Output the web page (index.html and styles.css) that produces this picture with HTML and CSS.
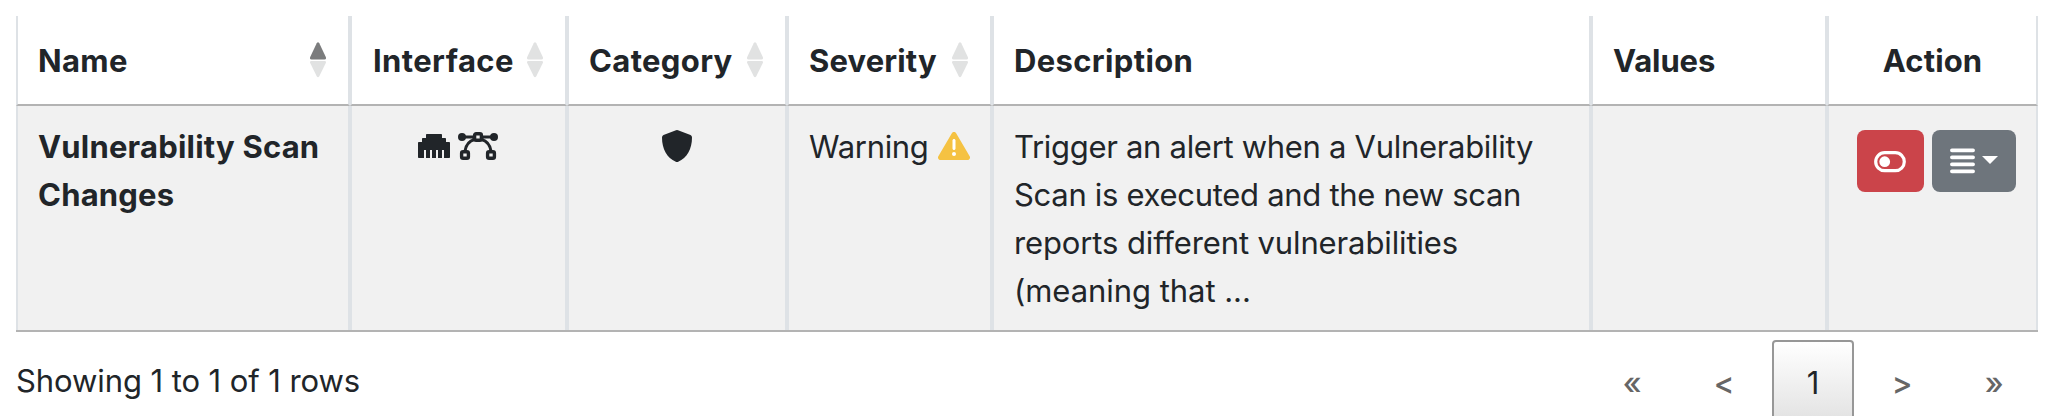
FILE: index.html
```html
<!DOCTYPE html>
<html lang="en">
<head>
<meta charset="utf-8">
<title>Alerts</title>
<link rel="stylesheet" href="styles.css">
</head>
<body>
<main>
<div class="grid head">
  <div class="cell sortable"><span class="h-name">Name</span><svg class="sort" viewBox="0 0 16 36"><path class="on" d="M6.700 1.200Q8-.8 9.300 1.200L15.800 15Q16.600 17.500 14.500 17.500H1.500Q-.6 17.500.2 15Z"/><path class="off" d="M6.700 34.300Q8 36.300 9.300 34.300L15.800 21Q16.600 19 14.500 19H1.500Q-.6 19 .2 21Z"/></svg></div>
  <div class="cell sortable"><span class="h-interface">Interface</span><svg class="sort" viewBox="0 0 16 36"><path class="off" d="M6.700 1.200Q8-.8 9.300 1.200L15.800 15Q16.600 17.500 14.500 17.500H1.500Q-.6 17.500.2 15Z"/><path class="off" d="M6.700 34.300Q8 36.300 9.300 34.300L15.800 21Q16.600 19 14.500 19H1.500Q-.6 19 .2 21Z"/></svg></div>
  <div class="cell sortable"><span class="h-category">Category</span><svg class="sort" viewBox="0 0 16 36"><path class="off" d="M6.700 1.200Q8-.8 9.300 1.200L15.800 15Q16.600 17.500 14.500 17.500H1.500Q-.6 17.500.2 15Z"/><path class="off" d="M6.700 34.300Q8 36.300 9.300 34.300L15.800 21Q16.600 19 14.500 19H1.500Q-.6 19 .2 21Z"/></svg></div>
  <div class="cell sortable"><span class="h-severity">Severity</span><svg class="sort" viewBox="0 0 16 36"><path class="off" d="M6.700 1.200Q8-.8 9.300 1.200L15.800 15Q16.600 17.500 14.500 17.500H1.500Q-.6 17.500.2 15Z"/><path class="off" d="M6.700 34.300Q8 36.300 9.300 34.300L15.800 21Q16.600 19 14.500 19H1.500Q-.6 19 .2 21Z"/></svg></div>
  <div class="cell"><span class="h-description">Description</span></div>
  <div class="cell"><span class="h-values">Values</span></div>
  <div class="cell center"><span class="h-action">Action</span></div>
</div>
<div class="grid row">
  <div class="cell name">Vulnerability Scan<br>Changes</div>
  <div class="cell icons">
    <svg width="32" height="32" viewBox="0 0 512 512"><path fill="currentColor" d="M496 192h-48v-48c0-8.800-7.200-16-16-16h-48V80c0-8.800-7.200-16-16-16H144c-8.800 0-16 7.200-16 16v48H80c-8.800 0-16 7.200-16 16v48H16c-8.800 0-16 7.200-16 16v224c0 8.800 7.200 16 16 16h80V320h32v128h64V320h32v128h64V320h32v128h64V320h32v128h80c8.800 0 16-7.200 16-16V208c0-8.800-7.200-16-16-16z"/></svg>
    <svg width="40" height="32" viewBox="0 0 40 32"><circle cx="4" cy="7" r="4" fill="currentColor"/><circle cx="36" cy="7" r="4" fill="currentColor"/><g fill="none" stroke="currentColor" stroke-width="3.400"><path stroke-width="3" d="M4 7h12M24 7h12M16.500 9.500C11 11 8 15 7 21M23.500 9.500C29 11 32 15 33 21"/><rect x="16.600" y="3.700" width="6.800" height="6.600" rx="1.500"/><rect x="3.600" y="21.700" width="6.800" height="6.600" rx="1.500"/><rect x="29.600" y="21.700" width="6.800" height="6.600" rx="1.500"/></g></svg>
  </div>
  <div class="cell icons">
    <svg width="32" height="32" viewBox="0 0 32 32"><path fill="currentColor" d="M15 .3Q16 -.2 17 .3L29.500 5Q31 5.700 31 7.500C31 19 26 28 17.200 31.700Q16 32.200 14.800 31.700C6 28 1 19 1 7.500Q1 5.700 2.500 5Z"/></svg>
  </div>
  <div class="cell severity"><span class="warning">Warning</span><svg width="32" height="32" viewBox="0 0 512 512"><path fill="#f5c242" d="M256 32c14.200 0 27.300 7.500 34.500 19.800l216 368c7.300 12.400 7.300 27.700.2 40.100S486.300 480 472 480H40c-14.300 0-27.600-7.700-34.700-20.100s-7-27.800.2-40.100l216-368C228.700 39.500 241.800 32 256 32z"/><path fill="#fff" d="M256 144c-13.300 0-24 10.700-24 24v128c0 13.300 10.700 24 24 24s24-10.700 24-24V168c0-13.300-10.700-24-24-24z"/><circle cx="256" cy="384" r="32" fill="#fff"/></svg></div>
  <div class="cell"><div class="d1">Trigger an alert when a Vulnerability</div><div class="d2">Scan is executed and the new scan</div><div class="d3">reports different vulnerabilities</div><div class="d4">(meaning that ...</div></div>
  <div class="cell"></div>
  <div class="cell actions">
    <button class="btn danger" aria-label="Toggle"><svg width="32" height="22" viewBox="0 0 32 22"><rect x="1.700" y="1.700" width="28.600" height="18" rx="9" fill="none" stroke="#fff" stroke-width="3.200"/><circle cx="10.700" cy="10.700" r="5.400" fill="#fff"/></svg></button>
    <button class="btn secondary" aria-label="Menu"><svg width="25" height="26" viewBox="0 0 25 26"><path stroke="#fff" stroke-width="3.700" stroke-linecap="round" d="M1.900 2.300h21.200M1.900 9.300h21.200M1.900 16.300h21.200M1.900 23.300h21.200"/></svg><svg class="caret" width="16" height="8" viewBox="0 0 16 8"><path fill="#fff" d="M0 0h16L8 8z"/></svg></button>
  </div>
</div>
<footer>
  <div class="info">Showing 1 to 1 of 1 rows</div>
  <nav class="pages"><a>«</a><a>&lt;</a><a class="current">1</a><a>&gt;</a><a>»</a></nav>
</footer>
</main>
</body>
</html>
```
FILE: styles.css
```css
* { box-sizing: border-box; }
html, body { margin: 0; height: 416px; overflow: hidden; background: #fff; }
body { font: 31px/48px Inter, "Liberation Sans", sans-serif; letter-spacing: -0.3px; color: #212529; }
main { padding: 16px 10px 0 16px; }
.grid { display: grid; grid-template-columns: 334px 217px 220px 205px 599px 236px 211px; }
.cell { border: solid #dee2e6; border-width: 0 2px; padding: 17px 20px 0; white-space: nowrap; }
.head .cell { height: 90px; padding-top: 21px; border-bottom: 2px solid #b3b3b3; font-weight: 700; }
.head .sortable { display: flex; justify-content: space-between; }
.head .center { text-align: center; }
.h-name, .h-description { letter-spacing: 0.35px; }
.h-interface { letter-spacing: 0.4px; padding-left: 1px; }
.h-category { letter-spacing: 0.35px; }
.h-severity { letter-spacing: 0.15px; }
.h-values { letter-spacing: -0.1px; }
.h-action { letter-spacing: 0.15px; }
.sort { width: 16px; height: 36px; margin-top: 5px; margin-right: 2px; flex: none; }
.on { fill: #7b7c7d; }
.off { fill: #e1e2e2; }
.row { height: 226px; background: #f1f1f1; border-bottom: 2px solid #b3b3b3; }
.name { font-weight: 700; letter-spacing: 0.2px; }
.d3 { letter-spacing: -0.12px; }
.d4 { letter-spacing: -0.05px; }
.row .icons { display: flex; justify-content: center; align-items: flex-start; gap: 8px; padding: 24px 20px 0 19px; }
.icons svg, .severity svg { flex: none; }
.severity { display: flex; justify-content: space-between; }
.severity svg { margin-top: 7px; }
.row .actions { display: flex; gap: 8px; padding: 24px 20px 0 28px; }
.btn { display: flex; align-items: center; justify-content: center; height: 62px; border: 0; border-radius: 8px; padding: 0; }
.danger { width: 67px; background: #cb444a; }
.danger svg { margin-right: 2px; margin-top: 2px; }
.secondary { width: 84px; background: #6e757c; gap: 7px; }
.caret { margin-bottom: 3px; }
footer { display: flex; justify-content: space-between; }
.info { padding-top: 25px; letter-spacing: -0.08px; }
.pages { display: flex; gap: 4px; padding-top: 8px; }
.pages a { width: 88px; height: 84px; padding-top: 19px; text-align: center; color: #666; font-weight: 500; }
.pages .current { width: 82px; padding-top: 17px; border: 2px solid #979797; border-radius: 4px; background: linear-gradient(#fff, #e2e2e2); color: #212529; font-weight: 400; }
```
